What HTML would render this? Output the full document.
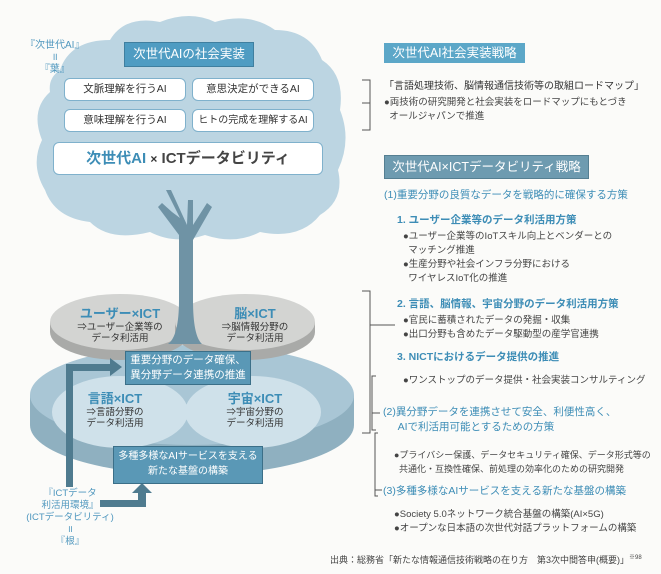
<!DOCTYPE html>
<html><head><meta charset="utf-8"><style>
body{margin:0;width:661px;height:574px;background:#fbfbf9;position:relative;overflow:hidden;font-family:"Liberation Sans","Noto Sans CJK JP",sans-serif;color:#333}
div{white-space:nowrap}
.a{position:absolute}
.box{position:absolute;background:#fff;border:1.5px solid #7fb1cc;border-radius:6px;text-align:center;font-size:10.5px;color:#333}
.h{position:absolute;color:#fff;font-size:12.5px;text-align:center}
.b{font-size:9.5px;color:#444}
.t{color:#3d8db6;font-weight:bold}
.c{text-align:center;position:absolute}
</style></head><body>
<svg width="661" height="574" style="position:absolute;left:0;top:0">
<path d="M60 70 Q70 40 110 40 Q125 15 160 22 Q190 10 215 22 Q250 12 275 30 Q310 30 322 60 Q345 75 340 110 Q352 140 338 170 Q345 200 320 215 Q300 240 260 232 Q235 245 205 235 Q175 245 150 232 Q110 242 90 222 Q55 218 45 190 Q30 165 42 140 Q30 110 50 92 Q48 78 60 70Z" fill="#bcd5e2"/>
<path d="M166 190 L180 218 L172 212 L162 203 L158 207 L179 235 L179 320 Q176 335 166 343 L200 343 Q193 335 193 320 L193 240 L212 207 L207 203 L193 225 L193 200 L188 200 L187 225 L171 190Z" fill="#6f93a5"/>
<path d="M30 395 L30 425 A162 50 0 0 0 354 425 L354 395Z" fill="#8fb0c0"/>
<ellipse cx="192" cy="395" rx="162" ry="50" fill="#a9c6d5"/>
<ellipse cx="120" cy="412" rx="68" ry="36" fill="#cfe1ea"/>
<ellipse cx="253" cy="412" rx="68" ry="36" fill="#cfe1ea"/>
<path d="M50 322 L50 332 A70 28 0 0 0 190 332 L190 322Z" fill="#a9aaa8"/>
<ellipse cx="120" cy="322" rx="70" ry="28" fill="#d3d4d2"/>
<path d="M175 322 L175 332 A70 28 0 0 0 315 332 L315 322Z" fill="#a9aaa8"/>
<ellipse cx="245" cy="322" rx="70" ry="28" fill="#d3d4d2"/>
<path d="M179 300 Q179 336 168 344 L202 344 Q193 336 193 300Z" fill="#6f93a5"/>
<path d="M66 487 L66 364 L110 364 L110 358 L122 367 L110 376 L110 371 L73 371 L73 487Z" fill="#4f7b8f"/>
<path d="M100 500 L138 500 L138 493 L132 493 L142 483 L152 493 L146 493 L146 507 L100 507Z" fill="#4f7b8f"/>
<g stroke="#555" stroke-width="1" fill="none">
<path d="M362 80 L370 80 L370 130 L362 130 M362 103 L370 103"/>
<path d="M362 291 L370 291 L370 433 L362 433 M370 325 L395 325"/>
<path d="M376 376 L372 376 L372 430 L376 430 M372 413 L380 413"/>
<path d="M378 433 L375 433 L375 496 L378 496 M375 490 L382 490"/>
</g>
</svg>
<div class="a" style="left:25px;top:40px;font-size:10px;color:#4f97be;text-align:center;line-height:12px">『次世代AI』<br>॥<br>『葉』</div>
<div class="h" style="left:124px;top:42px;height:23px;line-height:23px;background:#4f9cc2;border:1px solid #3f7f9f;width:128px">次世代AIの社会実装</div>
<div class="box" style="left:64px;top:78px;width:120px;height:21px;line-height:21px">文脈理解を行うAI</div>
<div class="box" style="left:192px;top:78px;width:120px;height:21px;line-height:21px">意思決定ができるAI</div>
<div class="box" style="left:64px;top:109px;width:120px;height:21px;line-height:21px">意味理解を行うAI</div>
<div class="box" style="left:192px;top:109px;width:120px;height:21px;line-height:21px;font-size:10px">ヒトの完成を理解するAI</div>
<div class="box" style="left:53px;top:142px;width:268px;height:31px;line-height:31px;font-size:15px;font-weight:bold"><span style="color:#3d8db6">次世代AI</span> <span style="font-size:12px">×</span> <span style="color:#444">ICTデータビリティ</span></div>
<div class="c" style="left:60px;top:306px;width:120px;font-size:9.5px;line-height:11px"><div class="t" style="font-size:13px;line-height:16px">ユーザー×ICT</div>⇒ユーザー企業等の<br>データ利活用</div>
<div class="c" style="left:195px;top:306px;width:120px;font-size:9.5px;line-height:11px"><div class="t" style="font-size:13px;line-height:16px">脳×ICT</div>⇒脳情報分野の<br>データ利活用</div>
<div class="c" style="left:55px;top:391px;width:120px;font-size:9.5px;line-height:11px"><div class="t" style="font-size:13px;line-height:16px">言語×ICT</div>⇒言語分野の<br>データ利活用</div>
<div class="c" style="left:195px;top:391px;width:120px;font-size:9.5px;line-height:11px"><div class="t" style="font-size:13px;line-height:16px">宇宙×ICT</div>⇒宇宙分野の<br>データ利活用</div>
<div class="c" style="left:125px;top:351px;width:124px;height:31px;background:#5a98b6;border:1px solid #3b6f88;color:#fff;font-size:10.5px;line-height:15px;padding-top:1px">重要分野のデータ確保、<br>異分野データ連携の推進</div>
<div class="c" style="left:113px;top:446px;width:148px;height:34px;background:#5a98b6;border:1px solid #3b6f88;color:#fff;font-size:10px;line-height:15px;padding-top:2px">多種多様なAIサービスを支える<br>新たな基盤の構築</div>
<div class="c" style="left:20px;top:488px;width:100px;font-size:9.5px;color:#4f97be;line-height:12px">『ICTデータ<br>利活用環境』<br>(ICTデータビリティ)<br>॥<br>『根』</div>

<div class="h" style="left:384px;top:43px;height:20px;line-height:20px;background:#5ca7c8;width:141px">次世代AI社会実装戦略</div>
<div class="a" style="left:384px;top:77px;font-size:10px;color:#333">「言語処理技術、脳情報通信技術等の取組ロードマップ」</div>
<div class="a b" style="left:384px;top:96px;line-height:14px">●両技術の研究開発と社会実装をロードマップにもとづき<br>&nbsp;&nbsp;オールジャパンで推進</div>
<div class="h" style="left:384px;top:155px;height:22px;line-height:22px;background:#6e9bb0;border:1px solid #557f92;width:203px">次世代AI×ICTデータビリティ戦略</div>
<div class="a t" style="left:384px;top:187px;font-size:10.5px;font-weight:normal">(1)重要分野の良質なデータを戦略的に確保する方策</div>
<div class="a t" style="left:397px;top:212px;font-size:10.5px">1. ユーザー企業等のデータ利活用方策</div>
<div class="a b" style="left:403px;top:230px;line-height:14px">●ユーザー企業等のIoTスキル向上とベンダーとの<br>&nbsp;&nbsp;マッチング推進<br>●生産分野や社会インフラ分野における<br>&nbsp;&nbsp;ワイヤレスIoT化の推進</div>
<div class="a t" style="left:397px;top:296px;font-size:10.5px">2. 言語、脳情報、宇宙分野のデータ利活用方策</div>
<div class="a b" style="left:403px;top:314px;line-height:14px">●官民に蓄積されたデータの発掘・収集<br>●出口分野も含めたデータ駆動型の産学官連携</div>
<div class="a t" style="left:397px;top:349px;font-size:10.5px">3. NICTにおけるデータ提供の推進</div>
<div class="a b" style="left:403px;top:372px">●ワンストップのデータ提供・社会実装コンサルティング</div>
<div class="a t" style="left:383px;top:405px;font-size:10.5px;font-weight:normal;line-height:15px">(2)異分野データを連携させて安全、利便性高く、<br>&nbsp;&nbsp;&nbsp;&nbsp;&nbsp;AIで利活用可能とするための方策</div>
<div class="a b" style="left:394px;top:448px;line-height:14px;font-size:9px">●プライバシー保護、データセキュリティ確保、データ形式等の<br>&nbsp;&nbsp;共通化・互換性確保、前処理の効率化のための研究開発</div>
<div class="a t" style="left:383px;top:483px;font-size:10.5px;font-weight:normal">(3)多種多様なAIサービスを支える新たな基盤の構築</div>
<div class="a b" style="left:394px;top:508px;line-height:14px">●Society 5.0ネットワーク統合基盤の構築(AI×5G)<br>●オープンな日本語の次世代対話プラットフォームの構築</div>
<div class="a" style="left:330px;top:552px;font-size:9px;color:#444">出典：総務省「新たな情報通信技術戦略の在り方　第3次中間答申(概要)」<sup style="font-size:6px">※98</sup></div>
</body></html>
